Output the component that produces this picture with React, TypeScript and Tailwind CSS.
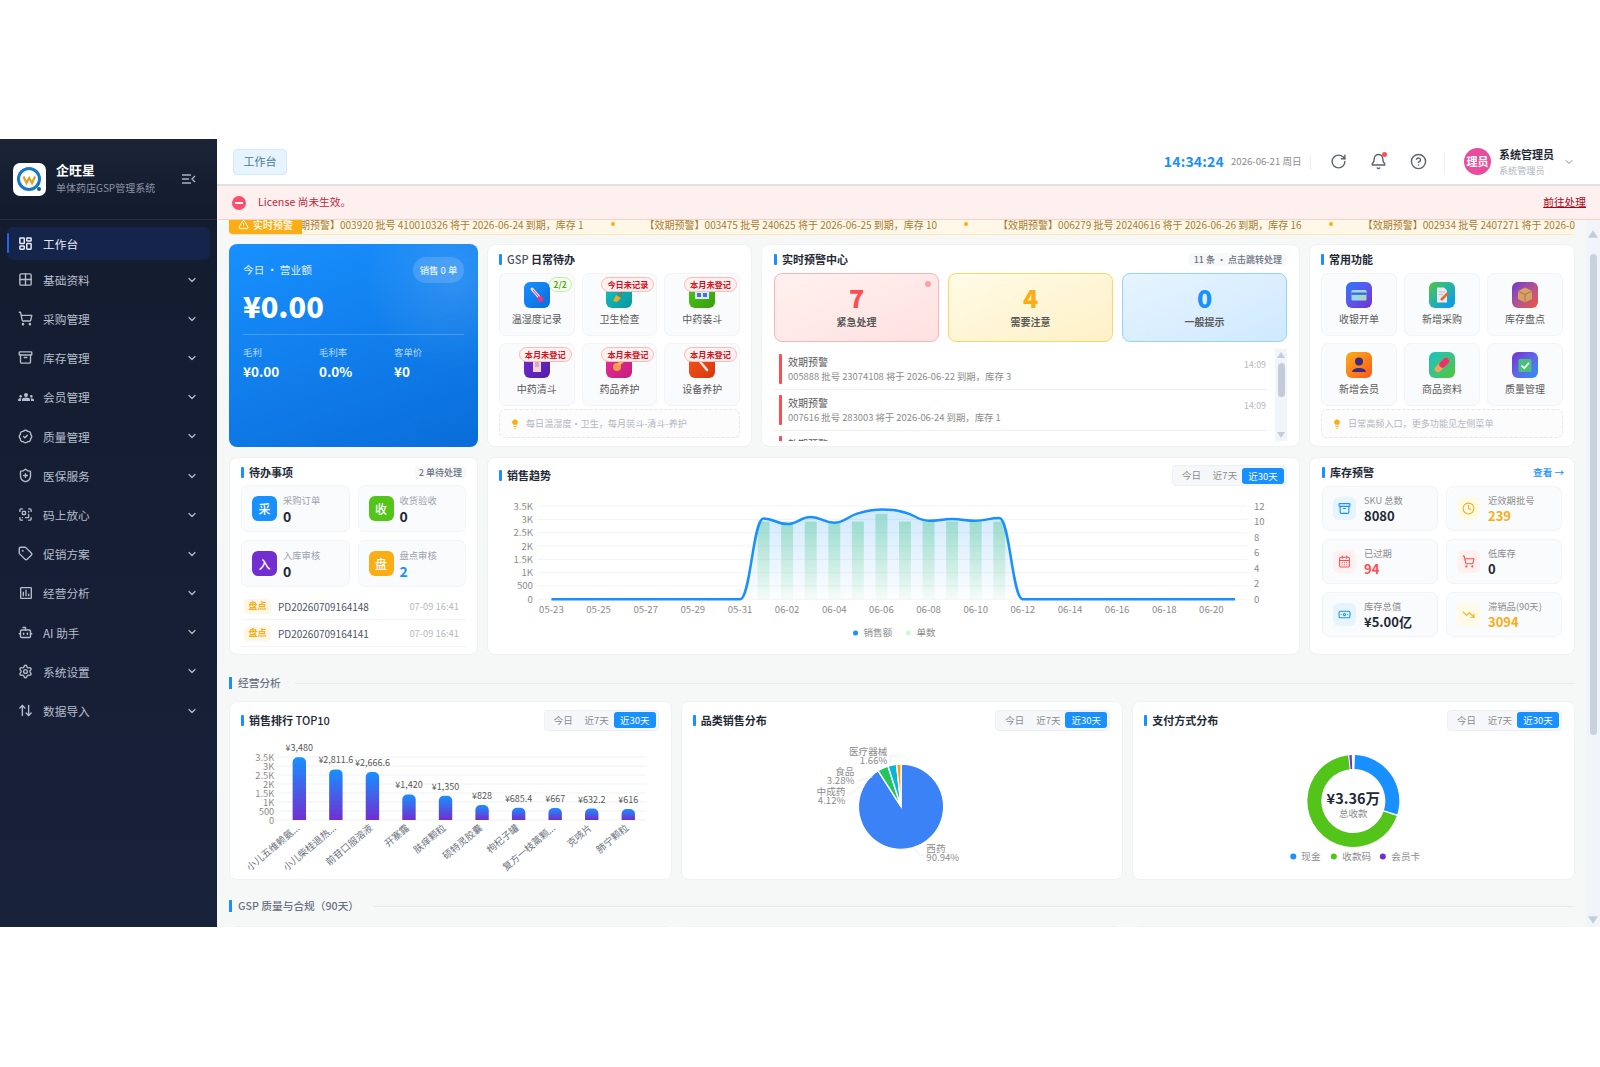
import type { ReactNode } from 'react';
import {
  Archive,
  ArrowUpDown,
  BadgeCheck,
  Banknote,
  Bell,
  Bot,
  CalendarDays,
  ChevronDown,
  CircleHelp,
  Clock,
  Grid2x2,
  LayoutDashboard,
  Lightbulb,
  RotateCw,
  ScanQrCode,
  Settings,
  ShieldPlus,
  ShoppingCart,
  Tag,
  TrendingDown,
  TriangleAlert,
} from 'lucide-react';
import { MdGroups, MdOutlineAssessment } from 'react-icons/md';

const menu = [
  { label: '基础资料', icon: Grid2x2 },
  { label: '采购管理', icon: ShoppingCart },
  { label: '库存管理', icon: Archive },
  { label: '会员管理', icon: MdGroups, solid: true },
  { label: '质量管理', icon: BadgeCheck },
  { label: '医保服务', icon: ShieldPlus },
  { label: '码上放心', icon: ScanQrCode },
  { label: '促销方案', icon: Tag },
  { label: '经营分析', icon: MdOutlineAssessment, solid: true },
  { label: 'AI 助手', icon: Bot },
  { label: '系统设置', icon: Settings },
  { label: '数据导入', icon: ArrowUpDown },
];

const ticker = [
  '【效期预警】003920 批号 410010326 将于 2026-06-24 到期，库存 1',
  '【效期预警】003475 批号 240625 将于 2026-06-25 到期，库存 10',
  '【效期预警】006279 批号 20240616 将于 2026-06-26 到期，库存 16',
  '【效期预警】002934 批号 2407271 将于 2026-06-27 到期，库存 8',
];

// small drawings used inside the gradient tiles
const art: Record<string, ReactNode> = {
  thermo: (
    <g>
      <path d="M8 7 L15 15" stroke="#f8d7e3" strokeWidth="3" strokeLinecap="round" />
      <circle cx="16.5" cy="17" r="2.8" fill="#f5317f" />
      <path d="M9 8 L15 15" stroke="#f5317f" strokeWidth="1" />
    </g>
  ),
  broom: (
    <g>
      <path d="M19 6 L13 14" stroke="#a8612a" strokeWidth="1.6" />
      <path d="M10 13 L15 16 L11 20 L7 19 Z" fill="#f5a623" />
    </g>
  ),
  book: (
    <g>
      <path d="M6 9 h14 v8 h-14 Z" fill="#dbeafe" />
      <path d="M8 11 h4 v4 h-4 Z M14 11 h4 v4 h-4 Z" fill="#4b6fd6" />
      <circle cx="13" cy="7" r="2.4" fill="#e8336b" />
    </g>
  ),
  jar: (
    <g>
      <path d="M9 6 h8 v14 h-8 Z" fill="#f2d4dd" />
      <path d="M11 10 h4 v5 h-4 Z" fill="#d9a9c8" />
    </g>
  ),
  capsule: (
    <g>
      <circle cx="11" cy="15" r="4" fill="#f59e42" />
      <path d="M13 12 L18 8" stroke="#f7b267" strokeWidth="3" strokeLinecap="round" />
    </g>
  ),
  wrench: (
    <path d="M9 7 L18 18" stroke="#e8e4e0" strokeWidth="2.6" strokeLinecap="round" />
  ),
  card: (
    <g>
      <rect x="5.5" y="8" width="15" height="10.5" rx="1.2" fill="#9ad9ec" />
      <rect x="5.5" y="10.5" width="15" height="2.4" fill="#3f6fc7" />
      <rect x="15" y="15" width="4" height="1.6" fill="#f2c14e" />
    </g>
  ),
  doc: (
    <g>
      <path d="M8 5.5 h7 l3 3 v12 h-10 Z" fill="#e8ecef" />
      <path d="M10 10 h6 M10 12.5 h4" stroke="#b8c0c8" strokeWidth="1" />
      <path d="M12 18 L19 11" stroke="#f0652f" strokeWidth="2.6" />
    </g>
  ),
  box: (
    <g>
      <path d="M13 5.5 L20 9 V17 L13 20.5 L6 17 V9 Z" fill="#d9a066" />
      <path d="M6 9 L13 12.5 L20 9 M13 12.5 V20.5" stroke="#a87443" strokeWidth="1" fill="none" />
    </g>
  ),
  user: (
    <g>
      <circle cx="13" cy="9.5" r="4" fill="#3b2a80" />
      <path d="M6 20 C6.5 14.5 19.5 14.5 20 20 Z" fill="#3b2a80" />
    </g>
  ),
  pill: (
    <g>
      <path d="M9 17 L17 9" stroke="#f2a25c" strokeWidth="6.5" strokeLinecap="round" />
      <path d="M13.5 12.5 L17 9" stroke="#e8336b" strokeWidth="6.5" strokeLinecap="round" />
    </g>
  ),
  check: (
    <g>
      <rect x="6.5" y="7" width="13" height="13" rx="1.5" fill="#47c27a" />
      <path d="M9.5 13.5 L12.3 16.2 L17 10.8" stroke="#fff" strokeWidth="1.7" fill="none" />
    </g>
  ),
};

const gspTiles = [
  { label: '温湿度记录', badge: '2/2', ok: true, art: 'thermo', bg: 'from-[#1890ff] to-[#096dd9]' },
  { label: '卫生检查', badge: '今日未记录', art: 'broom', bg: 'from-[#13c2c2] to-[#08979c]' },
  { label: '中药装斗', badge: '本月未登记', art: 'book', bg: 'from-[#52c41a] to-[#389e0d]' },
  { label: '中药清斗', badge: '本月未登记', art: 'jar', bg: 'from-[#722ed1] to-[#531dab]' },
  { label: '药品养护', badge: '本月未登记', art: 'capsule', bg: 'from-[#eb2f96] to-[#c41d7f]' },
  { label: '设备养护', badge: '本月未登记', art: 'wrench', bg: 'from-[#fa541c] to-[#d4380d]' },
];

const quickTiles = [
  { label: '收银开单', art: 'card', bg: 'from-[#1677ff] to-[#722ed1]' },
  { label: '新增采购', art: 'doc', bg: 'from-[#52c41a] to-[#1890ff]' },
  { label: '库存盘点', art: 'box', bg: 'from-[#722ed1] to-[#f5512d]' },
  { label: '新增会员', art: 'user', bg: 'from-[#faad14] to-[#fa541c]' },
  { label: '商品资料', art: 'pill', bg: 'from-[#13c2c2] to-[#52c41a]' },
  { label: '质量管理', art: 'check', bg: 'from-[#722ed1] to-[#1890ff]' },
];

const alertTiles = [
  { n: '7', label: '紧急处理', box: 'border-[#ffb3b3] from-[#fff1f0] to-[#ffe1e1]', color: 'text-[#ff4d4f]', dot: true },
  { n: '4', label: '需要注意', box: 'border-[#ffd666] from-[#fffbe6] to-[#fff1c8]', color: 'text-[#faad14]', dot: false },
  { n: '0', label: '一般提示', box: 'border-[#91d5ff] from-[#e6f4ff] to-[#d0e9ff]', color: 'text-[#1890ff]', dot: false },
];

const alertRows = [
  { desc: '005888 批号 23074108 将于 2026-06-22 到期，库存 3' },
  { desc: '007616 批号 283003 将于 2026-06-24 到期，库存 1' },
  { desc: '004127 批号 240815 将于 2026-06-24 到期，库存 2' },
];

const todoTiles = [
  { ch: '采', label: '采购订单', n: '0', bg: 'bg-[#1890ff]', color: 'text-[#1f2937]' },
  { ch: '收', label: '收货验收', n: '0', bg: 'bg-[#52c41a]', color: 'text-[#1f2937]' },
  { ch: '入', label: '入库审核', n: '0', bg: 'bg-[#722ed1]', color: 'text-[#1f2937]' },
  { ch: '盘', label: '盘点审核', n: '2', bg: 'bg-[#faad14]', color: 'text-[#1890ff]' },
];

const stockTiles = [
  { icon: Archive, label: 'SKU 总数', n: '8080', box: 'bg-[#e6f4ff] text-[#1890ff]', color: 'text-[#1f2937]' },
  { icon: Clock, label: '近效期批号', n: '239', box: 'bg-[#fffbe6] text-[#faad14]', color: 'text-[#faad14]' },
  { icon: CalendarDays, label: '已过期', n: '94', box: 'bg-[#fff1f0] text-[#ff4d4f]', color: 'text-[#ff4d4f]' },
  { icon: ShoppingCart, label: '低库存', n: '0', box: 'bg-[#fff1f0] text-[#ff4d4f]', color: 'text-[#1f2937]' },
  { icon: Banknote, label: '库存总值', n: '¥5.00亿', box: 'bg-[#e6f4ff] text-[#1890ff]', color: 'text-[#1f2937]' },
  { icon: TrendingDown, label: '滞销品(90天)', n: '3094', box: 'bg-[#fffbe6] text-[#faad14]', color: 'text-[#faad14]' },
];

// sales trend, 05-23 .. 06-21
const sales = [0, 0, 0, 0, 0, 0, 0, 0, 0, 3037, 2825, 3087, 2875, 3225, 3375, 3262, 2950, 3012, 2950, 3050, 0, 0, 0, 0, 0, 0, 0, 0, 0, 0];
const orders = [10, 10, 10, 10, 10, 11, 10, 10, 10, 10, 10];
const dayX = (i: number) => 551.5 + 23.6 * i;
const saleY = (v: number) => 599.3 - (v / 3500) * 93.3;

function salesPath() {
  const pts = sales.map((v, i) => [dayX(i), saleY(v)]);
  const slope = pts.map((_, i) => {
    if (i === 0 || i === pts.length - 1) return 0;
    const a = pts[i][1] - pts[i - 1][1];
    const b = pts[i + 1][1] - pts[i][1];
    return a * b <= 0 ? 0 : (a + b) / 2 / 23.6;
  });
  let d = `M${pts[0][0]} ${pts[0][1]}`;
  for (let i = 1; i < pts.length; i++) {
    const k = 23.6 * 0.45;
    d += ` C${pts[i - 1][0] + k} ${pts[i - 1][1] + slope[i - 1] * k} ${pts[i][0] - k} ${pts[i][1] - slope[i] * k} ${pts[i][0]} ${pts[i][1]}`;
  }
  return d;
}

const topProducts = [
  { name: '小儿五维赖氨...', v: 3480, text: '¥3,480' },
  { name: '小儿柴桂退热...', v: 2811.6, text: '¥2,811.6' },
  { name: '前苷口服溶液', v: 2666.6, text: '¥2,666.6' },
  { name: '开塞露', v: 1420, text: '¥1,420' },
  { name: '肤痒颗粒', v: 1350, text: '¥1,350' },
  { name: '硕特灵胶囊', v: 828, text: '¥828' },
  { name: '枸杞子罐', v: 685.4, text: '¥685.4' },
  { name: '复方一枝蒿颗...', v: 667, text: '¥667' },
  { name: '克咳片', v: 632.2, text: '¥632.2' },
  { name: '肺宁颗粒', v: 616, text: '¥616' },
];

function polar(cx: number, cy: number, r: number, deg: number) {
  const a = ((deg - 90) * Math.PI) / 180;
  return [cx + r * Math.cos(a), cy + r * Math.sin(a)];
}

function sector(cx: number, cy: number, r: number, from: number, to: number) {
  const [x1, y1] = polar(cx, cy, r, from);
  const [x2, y2] = polar(cx, cy, r, to);
  return `M${cx} ${cy} L${x1} ${y1} A${r} ${r} 0 ${to - from > 180 ? 1 : 0} 1 ${x2} ${y2} Z`;
}

function ring(cx: number, cy: number, r0: number, r1: number, from: number, to: number) {
  const [x1, y1] = polar(cx, cy, r1, from);
  const [x2, y2] = polar(cx, cy, r1, to);
  const [x3, y3] = polar(cx, cy, r0, to);
  const [x4, y4] = polar(cx, cy, r0, from);
  const big = to - from > 180 ? 1 : 0;
  return `M${x1} ${y1} A${r1} ${r1} 0 ${big} 1 ${x2} ${y2} L${x3} ${y3} A${r0} ${r0} 0 ${big} 0 ${x4} ${y4} Z`;
}

function Triangle({ up, size = 8 }: { up?: boolean; size?: number }) {
  return (
    <svg width={size} height={size - 2} viewBox="0 0 8 6" className="shrink-0">
      <path d={up ? 'M4 0 L8 6 H0 Z' : 'M0 0 H8 L4 6 Z'} fill="#c3ccd8" />
    </svg>
  );
}

function CardTitle({ children }: { children: ReactNode }) {
  return (
    <div className="flex items-center gap-[5px] text-[11px] font-semibold text-[#1f2937]">
      <span className="h-[11px] w-[3px] rounded-[1px] bg-[#1890ff]" />
      {children}
    </div>
  );
}

function RangeTabs() {
  return (
    <div className="flex h-[21px] items-center rounded-[4px] border border-[#eef0f4] bg-[#f5f7fa] px-[2px] text-[9.5px] text-[#8c8c8c]">
      <span className="w-[33px] text-center">今日</span>
      <span className="w-[34px] text-center">近7天</span>
      <span className="h-[16px] w-[42px] rounded-[3px] bg-[#1890ff] text-center leading-[16px] text-white">近30天</span>
    </div>
  );
}

function SectionTitle({ children }: { children: ReactNode }) {
  return (
    <div className="flex h-[14px] items-center gap-[6px] text-[10.7px] font-medium text-[#6b7280]">
      <span className="h-[12px] w-[3px] bg-[#1890ff]" />
      <span>{children}</span>
      <span className="ml-[8px] h-px flex-1 bg-[#e8eaed]" />
    </div>
  );
}

function Hint({ text }: { text: string }) {
  return (
    <div className="mt-[3px] flex h-[29px] items-center gap-[6px] rounded-[6px] border border-dashed border-[#e5e7eb] bg-[#fcfcfd] pl-[10px] text-[9.1px] text-[#b3b7bd]">
      <Lightbulb size={10} className="fill-[#faad14] text-[#faad14]" />
      {text}
    </div>
  );
}

function ArtIcon({ name, bg }: { name: string; bg: string }) {
  return (
    <span className={`block h-[26px] w-[26px] rounded-[6px] bg-linear-to-br ${bg}`}>
      <svg width="26" height="26" viewBox="0 0 26 26">
        {art[name]}
      </svg>
    </span>
  );
}

function Sidebar() {
  return (
    <aside className="flex w-[217px] shrink-0 flex-col bg-linear-to-b from-[#131b2e] to-[#18213a]">
      <div className="flex h-[81px] items-center border-b border-[#262e44] bg-linear-to-b from-[#1b2337] to-[#121a2d] pl-[13px] pr-[21px]">
        <span className="flex h-[33px] w-[33px] items-center justify-center rounded-[7px] bg-white">
          <svg width="27" height="27" viewBox="0 0 27 27">
            <circle cx="13" cy="13" r="10.5" fill="none" stroke="#1677c8" strokeWidth="3" />
            <path d="M7.5 10.5 L10.5 17 L13.2 12 L16 17 L19 10.5" fill="none" stroke="#d9a520" strokeWidth="2.2" />
            <circle cx="23" cy="23" r="2" fill="#155e8f" />
          </svg>
        </span>
        <div className="ml-[10px] flex-1 pb-[2px]">
          <div className="text-[13px] font-bold leading-[17px] text-white">企旺星</div>
          <div className="mt-[3px] text-[10px] leading-[14px] text-[#8b93a5]">单体药店GSP管理系统</div>
        </div>
        <svg width="14" height="12" viewBox="0 0 14 12" fill="none" stroke="#aab2c0" strokeWidth="1.4">
          <path d="M0 2 H9 M0 6 H7 M0 10 H9 M13 3 L10 6 L13 9" />
        </svg>
      </div>
      <nav className="pt-[7px] text-[11.7px] text-[#b6bdca]">
        <div className="relative mx-[7px] flex h-[33px] items-center rounded-[6px] bg-[#15244a] pl-[10.5px] text-[#e8ecf4]">
          <span className="absolute left-0 top-[6px] h-[20px] w-[2px] rounded bg-[#2563eb]" />
          <LayoutDashboard size={15} strokeWidth={2.4} />
          <span className="ml-[10.5px]">工作台</span>
        </div>
        {menu.map((item) => {
          const Icon = item.icon;
          return (
            <div key={item.label} className="flex h-[39.2px] items-center pl-[17.5px] pr-[19px]">
              {item.solid ? <Icon size={16} /> : <Icon size={15} strokeWidth={2.2} />}
              <span className={item.solid ? 'ml-[9.5px] flex-1' : 'ml-[10.5px] flex-1'}>{item.label}</span>
              <ChevronDown size={12} strokeWidth={2.4} />
            </div>
          );
        })}
      </nav>
    </aside>
  );
}

function Header() {
  return (
    <header className="flex h-[47px] shrink-0 items-center border-b-2 border-[#dfe1e4] bg-white pl-[16px] pr-[25px]">
      <span className="flex h-[26px] w-[54px] items-center justify-center rounded-[4px] border border-[#d3ebfb] bg-[#e6f4ff] text-[11px] text-[#4a7a99]">
        工作台
      </span>
      <div className="ml-auto text-[14px] font-bold tracking-[0.2px] text-[#1890ff]">14:34:24</div>
      <div className="ml-[7px] w-[73px] text-[9.6px] text-[#8c8c8c]">2026-06-21 周日</div>
      <span className="ml-[6px] h-[14px] w-px bg-[#eceef0]" />
      <RotateCw size={17} className="ml-[19px] text-[#5b6470]" />
      <span className="relative ml-[23px]">
        <Bell size={17} className="text-[#5b6470]" />
        <span className="absolute -top-[1px] right-[0px] h-[5px] w-[5px] rounded-full bg-[#ff4d4f]" />
      </span>
      <CircleHelp size={17} className="ml-[23px] text-[#5b6470]" />
      <span className="ml-[17px] h-[20px] w-px bg-[#eceef0]" />
      <span className="ml-[19px] flex h-[27px] w-[27px] items-center justify-center rounded-full bg-[#eb4b9b] text-[11px] font-bold text-white">
        理员
      </span>
      <div className="ml-[8px] w-[64px]">
        <div className="text-[11px] font-semibold leading-[15px] text-[#1f2937]">系统管理员</div>
        <div className="mt-[2px] text-[9.1px] leading-[12px] text-[#b0b5bd]">系统管理员</div>
      </div>
      <ChevronDown size={12} className="text-[#8c8c8c]" />
    </header>
  );
}

function AlertBar() {
  return (
    <div className="relative z-10 flex h-[34px] shrink-0 items-center border-b border-[#ffccc7] bg-[#fff0f0] pl-[15px] pr-[14px]">
      <span className="flex h-[14px] w-[14px] items-center justify-center rounded-full bg-[#ff4d6d]">
        <span className="h-[2px] w-[8px] bg-white" />
      </span>
      <span className="ml-[12px] text-[10.7px] text-[#c2263c]">License 尚未生效。</span>
      <a className="ml-auto text-[10.7px] text-[#a8071a] underline">前往处理</a>
    </div>
  );
}

function Ticker() {
  return (
    <div className="-mt-[6px] flex h-[21px] overflow-hidden rounded-[4px] border-b border-[#ffe7ba] bg-[#fff8e8]">
      <span className="flex w-[73px] shrink-0 items-center justify-center gap-[4px] bg-[#faad14] text-[10px] font-medium text-white">
        <TriangleAlert size={11} />
        实时预警
      </span>
      <div className="flex min-w-0 flex-1 items-center overflow-hidden text-[10px] text-[#a87a30]">
        <div className="-ml-[22px] flex shrink-0 items-center gap-[30px] whitespace-nowrap">
          {ticker.map((t) => (
            <span key={t} className="flex items-center gap-[27px]">
              {t}
              <span className="h-[4px] w-[4px] rounded-full bg-[#faad14]" />
            </span>
          ))}
        </div>
      </div>
    </div>
  );
}

function HeroCard() {
  return (
    <div className="rounded-[8px] bg-[radial-gradient(circle_at_90%_18%,rgba(255,255,255,0.12),transparent_32%),linear-gradient(160deg,#1890ff,#096dd9)] px-[14px] pt-[13px] text-white">
      <div className="flex h-[26px] items-center justify-between">
        <span className="text-[10.7px] text-white/85">今日 · 营业额</span>
        <span className="flex h-[26px] w-[51px] items-center justify-center rounded-full bg-white/15 text-[9.4px] font-medium text-white/85">
          销售 0 单
        </span>
      </div>
      <div className="mt-[3px] text-[29px] font-black leading-[38px]">¥0.00</div>
      <div className="mt-[10px] h-px bg-white/20" />
      <div className="mt-[10px] grid grid-cols-[76px_75px_1fr]">
        {[
          ['毛利', '¥0.00'],
          ['毛利率', '0.0%'],
          ['客单价', '¥0'],
        ].map(([label, value]) => (
          <div key={label}>
            <div className="text-[9.4px] leading-[14px] text-white/70">{label}</div>
            <div className="mt-[3px] text-[13.5px] font-bold leading-[18px]">{value}</div>
          </div>
        ))}
      </div>
    </div>
  );
}

function FunctionTile({ label, name, bg, badge, ok }: { label: string; name: string; bg: string; badge?: string; ok?: boolean }) {
  return (
    <div className="relative flex h-[63px] flex-col items-center rounded-[7px] border border-[#f2f4f6] bg-[#fafbfc] pt-[8px]">
      <ArtIcon name={name} bg={bg} />
      <div className="mt-[3px] text-[10px] leading-[15px] text-[#595959]">{label}</div>
      {badge && (
        <span
          className={`absolute right-[2px] top-[3px] flex h-[15px] items-center rounded-full border font-semibold ${
            ok
              ? 'border-[#c5eda5] bg-[#f6ffed] px-[4px] text-[8.4px] text-[#52a51a]'
              : 'border-[#ffb8b3] bg-[#fff1f0] px-[5px] text-[8.2px] text-[#cf1322]'
          }`}
        >
          {badge}
        </span>
      )}
    </div>
  );
}

function GspCard() {
  return (
    <div className="rounded-[8px] border border-[#eff1f3] bg-white px-[11px] pt-[7px]">
      <div className="flex h-[14px] items-center">
        <CardTitle>
          <span>
            <span className="font-medium text-[#4b5563]">GSP</span> 日常待办
          </span>
        </CardTitle>
      </div>
      <div className="mt-[7px] grid grid-cols-3 gap-[7px]">
        {gspTiles.map((t) => (
          <FunctionTile key={t.label} label={t.label} name={t.art} bg={t.bg} badge={t.badge} ok={t.ok} />
        ))}
      </div>
      <Hint text="每日温湿度·卫生，每月装斗-清斗-养护" />
    </div>
  );
}

function QuickCard() {
  return (
    <div className="rounded-[8px] border border-[#eff1f3] bg-white px-[11px] pt-[7px]">
      <div className="flex h-[14px] items-center">
        <CardTitle>常用功能</CardTitle>
      </div>
      <div className="mt-[7px] grid grid-cols-3 gap-[7px]">
        {quickTiles.map((t) => (
          <FunctionTile key={t.label} label={t.label} name={t.art} bg={t.bg} />
        ))}
      </div>
      <Hint text="日常高频入口，更多功能见左侧菜单" />
    </div>
  );
}

function AlertCard() {
  return (
    <div className="rounded-[8px] border border-[#eff1f3] bg-white px-[12px] pt-[7px]">
      <div className="flex h-[14px] items-center justify-between">
        <CardTitle>实时预警中心</CardTitle>
        <span className="rounded-[3px] bg-[#f7f8fa] px-[5px] text-[9px] font-medium leading-[13px] text-[#6b7280]">11 条 · 点击跳转处理</span>
      </div>
      <div className="mt-[7px] grid grid-cols-3 gap-[9px]">
        {alertTiles.map((t) => (
          <div key={t.label} className={`relative flex h-[69px] flex-col items-center rounded-[8px] border-[1.5px] bg-linear-to-br pt-[7px] ${t.box}`}>
            <div className={`text-[25px] font-black leading-[32px] ${t.color}`}>{t.n}</div>
            <div className="mt-[1px] text-[10px] font-semibold leading-[15px] text-[#595959]">{t.label}</div>
            {t.dot && <span className="absolute right-[7px] top-[7px] h-[6px] w-[6px] rounded-full bg-[#ffa0a0]" />}
          </div>
        ))}
      </div>
      <div className="mt-[7px] flex h-[92px] overflow-hidden">
        <div className="min-w-0 flex-1 pr-[8px]">
          {alertRows.map((r) => (
            <div key={r.desc} className="flex h-[41px] items-center border-b border-[#f0f0f0] pl-[5px] pr-[1px]">
              <span className="h-[30px] w-[3px] rounded-[1px] bg-[#ff4d4f]" />
              <div className="ml-[6px] flex-1">
                <div className="text-[10px] leading-[14px] text-[#595959]">效期预警</div>
                <div className="text-[9.4px] leading-[14px] text-[#8c8c8c]">{r.desc}</div>
              </div>
              <span className="-mt-[8px] text-[8.8px] text-[#b5b9bf]">14:09</span>
            </div>
          ))}
        </div>
        <div className="flex w-[12px] shrink-0 flex-col items-center bg-[#f1f5f9] py-[3px]">
          <Triangle up />
          <span className="mt-[5px] h-[34px] w-[7px] rounded-full bg-[#c3ccd8]" />
          <span className="mt-auto">
            <Triangle />
          </span>
        </div>
      </div>
    </div>
  );
}

function TodoCard() {
  return (
    <div className="rounded-[8px] border border-[#eff1f3] bg-white px-[11px] pt-[7px]">
      <div className="flex h-[14px] items-center justify-between">
        <CardTitle>待办事项</CardTitle>
        <span className="rounded-[3px] bg-[#f7f8fa] px-[4px] text-[9px] font-medium leading-[13px] text-[#6b7280]">2 单待处理</span>
      </div>
      <div className="mt-[6px] grid grid-cols-2 gap-[8px]">
        {todoTiles.map((t) => (
          <div key={t.label} className="flex h-[47px] items-center rounded-[7px] border border-[#f2f4f6] bg-[#fafbfc] pl-[10px]">
            <span className={`flex h-[25px] w-[25px] items-center justify-center rounded-[6px] text-[12px] font-medium text-white ${t.bg}`}>{t.ch}</span>
            <div className="ml-[6px] pt-[2px]">
              <div className="text-[9.3px] leading-[13px] text-[#9ca3af]">{t.label}</div>
              <div className={`text-[14px] font-bold leading-[18px] ${t.color}`}>{t.n}</div>
            </div>
          </div>
        ))}
      </div>
      <div className="mt-[6px]">
        {['PD20260709164148', 'PD20260709164141'].map((code) => (
          <div key={code} className="flex h-[27px] items-center border-b border-[#f5f5f5] px-[3px] pr-[7px]">
            <span className="flex h-[15px] w-[27px] items-center justify-center rounded-[3px] bg-[#fff7e6] text-[9px] font-bold text-[#faad14]">盘点</span>
            <span className="ml-[7px] flex-1 text-[10px] text-[#4b5563]">{code}</span>
            <span className="text-[9.4px] text-[#b5b9bf]">07-09 16:41</span>
          </div>
        ))}
      </div>
    </div>
  );
}

function SalesTrendCard() {
  const line = salesPath();
  const left = ['3.5K', '3K', '2.5K', '2K', '1.5K', '1K', '500', '0'];
  const right = ['12', '10', '8', '6', '4', '2', '0'];
  return (
    <div className="flex flex-col rounded-[8px] border border-[#eff1f3] bg-white">
      <div className="flex h-[35px] shrink-0 items-center justify-between pl-[11px] pr-[12px]">
        <CardTitle>销售趋势</CardTitle>
        <RangeTabs />
      </div>
      <svg className="block h-[159px] w-full" viewBox="0 0 812 159">
        <defs>
          <linearGradient id="trendArea" x1="0" y1="0" x2="0" y2="1">
            <stop offset="0" stopColor="#1890ff" stopOpacity="0.2" />
            <stop offset="1" stopColor="#1890ff" stopOpacity="0.01" />
          </linearGradient>
          <linearGradient id="trendBar" x1="0" y1="0" x2="0" y2="1">
            <stop offset="0" stopColor="#7fdc96" stopOpacity="0.55" />
            <stop offset="1" stopColor="#7fdc96" stopOpacity="0.06" />
          </linearGradient>
        </defs>
        <g transform="translate(-488 -493)" fontSize="9.6" fill="#8c8c8c">
          {left.map((t, i) => {
            const y = 506 + i * 13.33;
            return (
              <g key={t}>
                <line x1="538" x2="1248" y1={y} y2={y} stroke="#f2f3f5" />
                <text x="533" y={y + 3.5} textAnchor="end">{t}</text>
              </g>
            );
          })}
          {right.map((t, i) => (
            <text key={t} x="1255" y={506 + i * 15.55 + 3.5}>{t}</text>
          ))}
          {orders.map((n, i) => {
            const top = 599.3 - (n / 12) * 93.3;
            return <rect key={i} x={dayX(i + 9) - 6} y={top} width="12" height={599.3 - top} fill="url(#trendBar)" />;
          })}
          <path d={`${line} L${dayX(29)} 599.3 L${dayX(0)} 599.3 Z`} fill="url(#trendArea)" />
          <path d={line} fill="none" stroke="#1890ff" strokeWidth="2.5" />
          {Array.from({ length: 15 }).map((_, i) => {
            const d = new Date(Date.UTC(2026, 4, 23 + i * 2));
            const t = `${String(d.getUTCMonth() + 1).padStart(2, '0')}-${String(d.getUTCDate()).padStart(2, '0')}`;
            return (
              <text key={t} x={dayX(i * 2)} y="613.5" textAnchor="middle">{t}</text>
            );
          })}
          <circle cx="856" cy="633" r="2.5" fill="#1890ff" />
          <text x="864" y="636.5">销售额</text>
          <circle cx="909" cy="633" r="2.5" fill="#d3f5dc" />
          <text x="917" y="636.5">单数</text>
        </g>
      </svg>
    </div>
  );
}

function StockCard() {
  return (
    <div className="rounded-[8px] border border-[#eff1f3] bg-white px-[12px] pt-[7px]">
      <div className="flex h-[14px] items-center justify-between">
        <CardTitle>库存预警</CardTitle>
        <span className="-mr-[2px] text-[9.6px] font-medium text-[#1890ff]">查看 →</span>
      </div>
      <div className="mt-[7px] grid grid-cols-2 gap-x-[8px] gap-y-[8px]">
        {stockTiles.map((t) => {
          const Icon = t.icon;
          return (
            <div key={t.label} className="flex h-[45px] items-center rounded-[7px] border border-[#f2f4f6] bg-[#fafbfc] pl-[10px]">
              <span className={`flex h-[23px] w-[23px] items-center justify-center rounded-[6px] ${t.box}`}>
                <Icon size={13} />
              </span>
              <div className="ml-[8px] pt-[1px]">
                <div className="text-[9.3px] leading-[13px] text-[#8c8c8c]">{t.label}</div>
                <div className={`text-[13px] font-bold leading-[17px] ${t.color}`}>{t.n}</div>
              </div>
            </div>
          );
        })}
      </div>
    </div>
  );
}

function TopProductsCard() {
  const ticks = ['3.5K', '3K', '2.5K', '2K', '1.5K', '1K', '500', '0'];
  return (
    <div className="flex flex-col rounded-[8px] border border-[#eff1f3] bg-white">
      <div className="flex h-[36px] shrink-0 items-center justify-between pl-[11px] pr-[12px]">
        <CardTitle>
          <span>销售排行 <span className="font-medium">TOP10</span></span>
        </CardTitle>
        <RangeTabs />
      </div>
      <svg className="block h-[140px] w-full" viewBox="0 0 440 140">
        <defs>
          <linearGradient id="rankBar" x1="0" y1="0" x2="0" y2="1">
            <stop offset="0" stopColor="#1890ff" />
            <stop offset="1" stopColor="#722ed1" />
          </linearGradient>
        </defs>
        <g transform="translate(-230 -738)" fontSize="9.4" fill="#8c8c8c">
          {ticks.map((t, i) => {
            const y = 757 + i * 9;
            return (
              <g key={t}>
                <line x1="275" x2="646" y1={y} y2={y} stroke="#f0f1f3" />
                <text x="274" y={y + 3.5} textAnchor="end">{t}</text>
              </g>
            );
          })}
          {topProducts.map((p, i) => {
            const cx = 299 + i * 36.55;
            const h = (p.v / 3500) * 63;
            const top = 820 - h;
            return (
              <g key={p.name}>
                <path d={`M${cx - 6.7} 820 V${top + 5} a5 5 0 0 1 5 -5 h3.4 a5 5 0 0 1 5 5 V820 Z`} fill="url(#rankBar)" />
                <text x={cx} y={top - 6} textAnchor="middle" fontSize="9" fill="#595959">{p.text}</text>
                <text x={cx + 1} y={829} textAnchor="end" fontSize="9.6" fill="#6b7280" transform={`rotate(-40 ${cx + 1} 829)`}>
                  {p.name}
                </text>
              </g>
            );
          })}
        </g>
      </svg>
    </div>
  );
}

function CategoryCard() {
  return (
    <div className="flex flex-col rounded-[8px] border border-[#eff1f3] bg-white">
      <div className="flex h-[36px] shrink-0 items-center justify-between pl-[11px] pr-[12px]">
        <CardTitle>品类销售分布</CardTitle>
        <RangeTabs />
      </div>
      <svg className="block h-[140px] w-full" viewBox="0 0 440 140">
        <g transform="translate(-683 -738)" fontSize="9.6" fill="#8c8c8c">
          <path d={sector(901.7, 806.7, 42.7, 0, 327.4)} fill="#3b82f6" stroke="#fff" strokeWidth="1.4" />
          <path d={sector(901.7, 806.7, 42.7, 327.4, 342.2)} fill="#22c55e" stroke="#fff" strokeWidth="1.4" />
          <path d={sector(901.7, 806.7, 42.7, 342.2, 354)} fill="#06b6d4" stroke="#fff" strokeWidth="1.4" />
          <path d={sector(901.7, 806.7, 42.7, 354, 360)} fill="#f59e0b" stroke="#fff" strokeWidth="1.4" />
          <path d="M891 765 V756 H898 M873 777 L858 781 M863 785 L849 795 M915 848 L920 855 H925" fill="none" stroke="#eceef0" />
          <text x="888" y="755" textAnchor="end">医疗器械</text>
          <text x="888" y="764" textAnchor="end">1.66%</text>
          <text x="855" y="775" textAnchor="end">食品</text>
          <text x="855" y="784" textAnchor="end">3.28%</text>
          <text x="846" y="795" textAnchor="end">中成药</text>
          <text x="846" y="804" textAnchor="end">4.12%</text>
          <text x="927" y="852">西药</text>
          <text x="927" y="861">90.94%</text>
        </g>
      </svg>
    </div>
  );
}

function PaymentCard() {
  return (
    <div className="flex flex-col rounded-[8px] border border-[#eff1f3] bg-white">
      <div className="flex h-[36px] shrink-0 items-center justify-between pl-[11px] pr-[12px]">
        <CardTitle>支付方式分布</CardTitle>
        <RangeTabs />
      </div>
      <svg className="block h-[140px] w-full" viewBox="0 0 440 140">
        <g transform="translate(-1134 -738)" fontSize="9.6" fill="#8c8c8c">
          <path d={ring(1354, 801, 32, 46, 2, 107)} fill="#1890ff" />
          <path d={ring(1354, 801, 32, 46, 109, 353.5)} fill="#52c41a" />
          <path d={ring(1354, 801, 32, 46, 355, 358)} fill="#722ed1" />
          <text x="1354" y="803.5" textAnchor="middle" fontSize="14.5" fontWeight="700" fill="#1f2937">¥3.36万</text>
          <text x="1354" y="817" textAnchor="middle">总收款</text>
          <circle cx="1294" cy="856.5" r="3" fill="#1890ff" />
          <text x="1302" y="860">现金</text>
          <circle cx="1334.5" cy="856.5" r="3" fill="#52c41a" />
          <text x="1343" y="860">收款码</text>
          <circle cx="1383.5" cy="856.5" r="3" fill="#722ed1" />
          <text x="1392" y="860">会员卡</text>
        </g>
      </svg>
    </div>
  );
}

export default function App() {
  return (
    <div className="h-[1067px] bg-white pt-[139px] font-['Noto_Sans_CJK_SC','Noto_Sans',sans-serif]">
      <div className="flex h-[788px] overflow-hidden">
        <Sidebar />
        <main className="flex min-w-0 flex-1 flex-col bg-[#f6f8f8]">
          <Header />
          <AlertBar />
          <div className="flex min-h-0 flex-1">
            <div className="min-w-0 flex-1 overflow-hidden pl-[12px] pr-[11px]">
              <Ticker />
              <div className="mt-[9px] grid h-[203px] grid-cols-[249px_265px_1fr_266px] gap-[9px]">
                <HeroCard />
                <GspCard />
                <AlertCard />
                <QuickCard />
              </div>
              <div className="mt-[10px] grid h-[198px] grid-cols-[249px_1fr_266px] gap-[9px]">
                <TodoCard />
                <SalesTrendCard />
                <StockCard />
              </div>
              <div className="mt-[21px]">
                <SectionTitle>经营分析</SectionTitle>
              </div>
              <div className="mt-[11px] grid h-[179px] grid-cols-3 gap-[9px]">
                <TopProductsCard />
                <CategoryCard />
                <PaymentCard />
              </div>
              <div className="mt-[19px]">
                <SectionTitle>GSP 质量与合规（90天）</SectionTitle>
              </div>
              <div className="mt-[13px] grid h-[40px] grid-cols-3 gap-[9px]">
                <div className="rounded-[8px] border border-[#eff1f3] bg-white" />
                <div className="rounded-[8px] border border-[#eff1f3] bg-white" />
                <div className="rounded-[8px] border border-[#eff1f3] bg-white" />
              </div>
            </div>
            <div className="flex w-[14px] shrink-0 flex-col items-center bg-[#f1f5f9]">
              <span className="mt-[10px]">
                <Triangle up size={10} />
              </span>
              <span className="mt-[16px] h-[481px] w-[7px] rounded-full bg-[#c7d2df]" />
              <span className="mb-[3px] mt-auto">
                <Triangle size={10} />
              </span>
            </div>
          </div>
        </main>
      </div>
    </div>
  );
}
